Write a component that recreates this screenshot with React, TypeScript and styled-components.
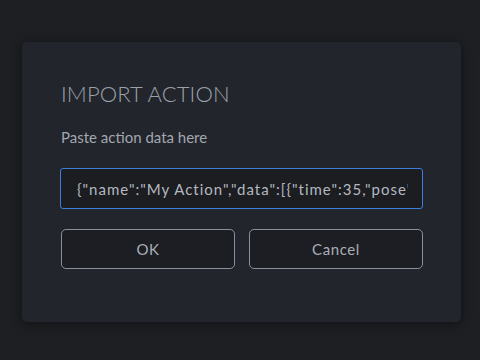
import React, { useState } from "react";
import styled, { createGlobalStyle } from "styled-components";

const GlobalStyle = createGlobalStyle`
  html, body {
    margin: 0;
    padding: 0;
    background: #1d1f23;
  }
  body {
    font-family: "Lato", "Open Sans", sans-serif;
  }
`;

const Page = styled.div`
  width: 480px;
  height: 360px;
  padding: 42px 19px 0 22px;
  box-sizing: border-box;
  background: #1d1f23;
`;

const Dialog = styled.div`
  width: 439px;
  height: 280px;
  box-sizing: border-box;
  padding: 37px 38px 0 39px;
  background: #22252c;
  border-radius: 5px;
  box-shadow: 0 2px 12px rgba(0, 0, 0, 0.45);
  display: flex;
  flex-direction: column;
`;

const Title = styled.h1`
  margin: 0;
  font-family: "Lato", sans-serif;
  font-weight: 300;
  font-size: 22px;
  line-height: 30px;
  color: #9ba1ab;
  letter-spacing: 0.1px;
`;

const Hint = styled.p`
  margin: 18px 0 0 0;
  font-family: "Lato", sans-serif;
  font-size: 15px;
  line-height: 20px;
  color: #a2a7b0;
`;

const Field = styled.input`
  margin: 21px 0 0 -1px;
  width: 363px;
  height: 41px;
  box-sizing: border-box;
  padding: 0 14px 0 16px;
  background: #1b1d21;
  border: 1.5px solid #3f7ddb;
  border-radius: 3px;
  outline: none;
  font-family: "Lato", sans-serif;
  font-size: 15px;
  letter-spacing: 1px;
  color: #b3b8c0;
`;

const Buttons = styled.div`
  display: flex;
  gap: 14px;
  margin-top: 20px;
`;

const Button = styled.button`
  width: 174px;
  height: 40px;
  box-sizing: border-box;
  background: #1c1e23;
  border: 1.5px solid #8a909b;
  border-radius: 5px;
  font-family: "Lato", sans-serif;
  font-size: 15px;
  letter-spacing: 0.6px;
  color: #a9aeb6;
  cursor: pointer;
`;

export default function App() {
  const [value, setValue] = useState(
    '{"name":"My Action","data":[{"time":35,"pose":[0,0,0,0]}]}'
  );
  return (
    <Page>
      <GlobalStyle />
      <Dialog>
        <Title>IMPORT ACTION</Title>
        <Hint>Paste action data here</Hint>
        <Field value={value} onChange={(e) => setValue(e.target.value)} />
        <Buttons>
          <Button>OK</Button>
          <Button>Cancel</Button>
        </Buttons>
      </Dialog>
    </Page>
  );
}
